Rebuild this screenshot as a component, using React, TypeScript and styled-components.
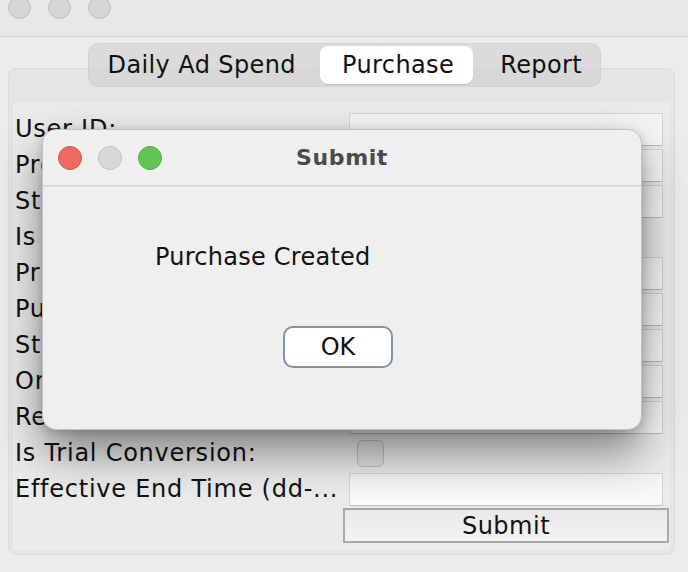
import React from "react";
import styled, { createGlobalStyle } from "styled-components";

const GlobalStyle = createGlobalStyle`
  html, body { margin: 0; padding: 0; background: #ececec; }
  body { font-family: "DejaVu Sans", "Liberation Sans", sans-serif; color: #111; }
  * { box-sizing: border-box; }
`;

const Window = styled.div`
  position: relative;
  width: 688px;
  height: 572px;
  overflow: hidden;
  background: #ececec;
`;

const TitleBar = styled.div`
  height: 37px;
  background: #e8e8e8;
  border-bottom: 1px solid #d2d2d2;
  display: flex;
  align-items: flex-start;
  gap: 17px;
  padding-left: 8px;
`;

const Light = styled.span<{ $color: string; $border: string }>`
  width: 23px;
  height: 23px;
  border-radius: 50%;
  margin-top: -4px;
  background: ${(p) => p.$color};
  border: 1px solid ${(p) => p.$border};
  flex: none;
`;

const TabStrip = styled.div`
  position: relative;
  z-index: 1;
  display: flex;
  justify-content: center;
  padding-top: 6px;
  margin-bottom: -19px;
`;

const Segmented = styled.div`
  display: flex;
  width: 513px;
  height: 44px;
  padding: 2px;
  border-radius: 10px;
  background: rgba(205, 205, 205, 0.55);
  border: 1px solid rgba(0, 0, 0, 0.04);
`;

const Tab = styled.div<{ $active?: boolean; $pl: number; $pr: number }>`
  display: flex;
  align-items: center;
  padding: 0 ${(p) => p.$pr}px 0 ${(p) => p.$pl}px;
  border-radius: 8px;
  font-size: 24px;
  letter-spacing: 0.4px;
  white-space: nowrap;
  color: #111;
  background: ${(p) => (p.$active ? "#ffffff" : "transparent")};
  box-shadow: ${(p) => (p.$active ? "0 1px 1px rgba(0,0,0,0.12)" : "none")};
`;

const Panel = styled.div`
  margin: 0 13px 0 8px;
  height: 487px;
  padding: 33px 4px 0 4px;
  background: #e5e5e5;
  border: 1px solid #dcdcdc;
  border-radius: 8px;
`;

const Form = styled.div`
  background: #ebebeb;
  height: 448px;
  padding-top: 11px;
  display: grid;
  grid-template-columns: 336px 314px;
  grid-auto-rows: 33px;
  row-gap: 3px;
`;

const Label = styled.div`
  padding-left: 2px;
  font-size: 24px;
  letter-spacing: 0.75px;
  line-height: 33px;
  white-space: nowrap;
  overflow: hidden;
  color: #111;
`;

const Field = styled.div`
  height: 33px;
  background: linear-gradient(#f3f3f3, #fafafa);
  border: 1px solid #d4d4d4;
  border-bottom-color: #bcbcbc;
`;

const CheckCell = styled.div`
  display: flex;
  align-items: center;
  padding-left: 8px;
`;

const Checkbox = styled.span`
  width: 27px;
  height: 27px;
  border-radius: 6px;
  border: 1px solid #c0c0c0;
  background: #e3e3e3;
`;

const SubmitButton = styled.button`
  grid-column: 2;
  margin: -1px -6px 0 -6px;
  height: 35px;
  border: 2px solid #a9a9a9;
  background: linear-gradient(#e9e9e9, #f3f3f3);
  font-family: inherit;
  font-size: 24px;
  letter-spacing: 0.5px;
  color: #111;
  padding: 0;
`;

const Dialog = styled.div`
  position: absolute;
  left: 42px;
  top: 129px;
  width: 600px;
  height: 301px;
  border-radius: 14px;
  background: #efefef;
  border: 1px solid #c2c2c2;
  box-shadow: 0 22px 46px rgba(0, 0, 0, 0.46), 0 2px 10px rgba(0, 0, 0, 0.16);
  z-index: 5;
  display: flex;
  flex-direction: column;
`;

const DialogBar = styled.div`
  height: 56px;
  display: grid;
  grid-template-columns: 1fr auto 1fr;
  align-items: center;
  border-bottom: 1px solid #d0d0d0;
  box-shadow: 0 1px 0 #e2e2e2;
`;

const Lights = styled.div`
  display: flex;
  gap: 16px;
  padding-left: 15px;
`;

const DialogLight = styled.span<{ $color: string; $border: string }>`
  width: 24px;
  height: 24px;
  border-radius: 50%;
  background: ${(p) => p.$color};
  border: 1px solid ${(p) => p.$border};
`;

const DialogTitle = styled.div`
  font-size: 22px;
  font-weight: bold;
  letter-spacing: 0.6px;
  color: #4a4a4a;
`;

const DialogBody = styled.div`
  display: flex;
  flex-direction: column;
  padding-top: 56px;
`;

const Message = styled.div`
  padding-left: 112px;
  font-size: 24px;
  letter-spacing: 0.25px;
  line-height: 30px;
  color: #111;
`;

const ButtonRow = styled.div`
  display: flex;
  justify-content: center;
  padding-right: 8px;
  margin-top: 54px;
`;

const OkButton = styled.button`
  width: 110px;
  height: 42px;
  border: 2px solid #8192a8;
  border-radius: 10px;
  background: #ffffff;
  font-family: inherit;
  font-size: 24px;
  color: #111;
  padding: 0;
`;

type Row = { label: string; kind: "text" | "check" };

const rows: Row[] = [
  { label: "User ID:", kind: "text" },
  { label: "Product ID:", kind: "text" },
  { label: "Start Time (dd-MM-yyyy):", kind: "text" },
  { label: "Is Renewal:", kind: "check" },
  { label: "Price:", kind: "text" },
  { label: "Purchase Time:", kind: "text" },
  { label: "Store:", kind: "text" },
  { label: "Order ID:", kind: "text" },
  { label: "Revenue:", kind: "text" },
  { label: "Is Trial Conversion:", kind: "check" },
  { label: "Effective End Time (dd-...", kind: "text" },
];

export default function App() {
  return (
    <>
      <GlobalStyle />
      <Window>
        <TitleBar>
          <Light $color="#d6d6d6" $border="#bebebe" />
          <Light $color="#d6d6d6" $border="#bebebe" />
          <Light $color="#d6d6d6" $border="#bebebe" />
        </TitleBar>
        <TabStrip>
          <Segmented>
            <Tab $pl={17} $pr={24}>
              Daily Ad Spend
            </Tab>
            <Tab $pl={22} $pr={19} $active>
              Purchase
            </Tab>
            <Tab $pl={27} $pr={16}>
              Report
            </Tab>
          </Segmented>
        </TabStrip>
        <Panel>
          <Form>
            {rows.map((r) => (
              <React.Fragment key={r.label}>
                <Label>{r.label}</Label>
                {r.kind === "text" ? (
                  <Field />
                ) : (
                  <CheckCell>
                    <Checkbox />
                  </CheckCell>
                )}
              </React.Fragment>
            ))}
            <SubmitButton>Submit</SubmitButton>
          </Form>
        </Panel>
        <Dialog>
          <DialogBar>
            <Lights>
              <DialogLight $color="#ee6a5f" $border="#d8574c" />
              <DialogLight $color="#d8d8d8" $border="#c2c2c2" />
              <DialogLight $color="#62c554" $border="#52ad45" />
            </Lights>
            <DialogTitle>Submit</DialogTitle>
            <div />
          </DialogBar>
          <DialogBody>
            <Message>Purchase Created</Message>
            <ButtonRow>
              <OkButton>OK</OkButton>
            </ButtonRow>
          </DialogBody>
        </Dialog>
      </Window>
    </>
  );
}
